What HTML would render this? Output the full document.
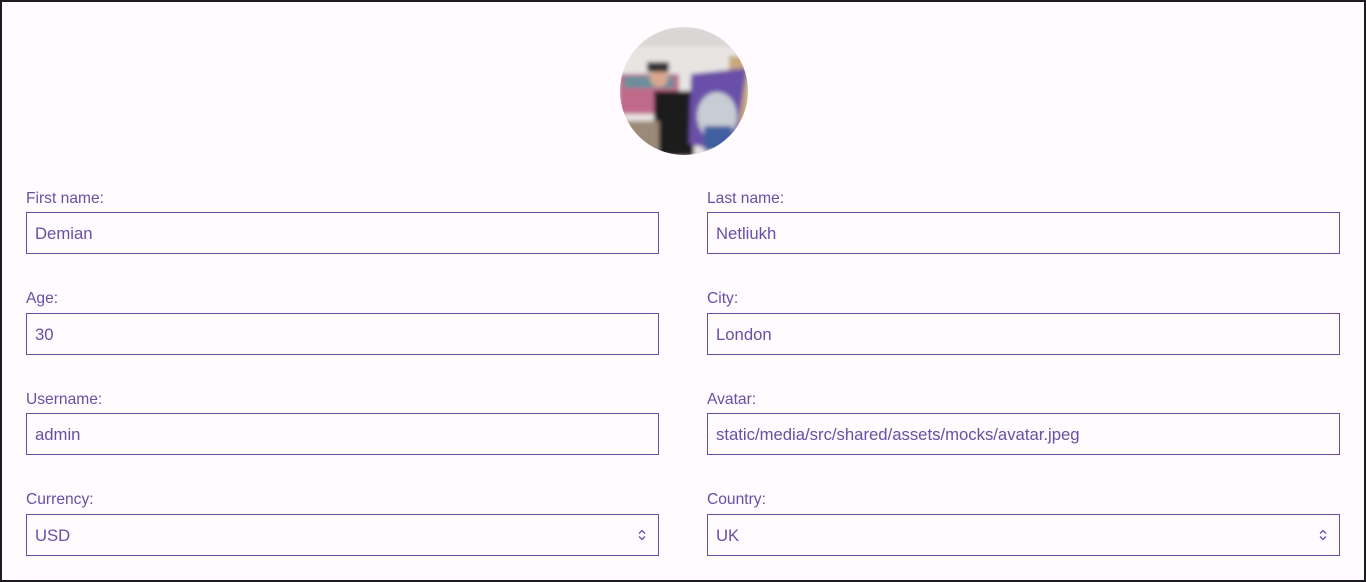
<!DOCTYPE html>
<html><head><style>
*{box-sizing:border-box;margin:0;padding:0}
html,body{width:1366px;height:582px;overflow:hidden;background:#fffbfe}
body{border:2px solid #1c1b1f;position:relative;font-family:"Liberation Sans",sans-serif;color:#6750a4}
.lab{position:absolute;font-size:15.6px;line-height:18px;top:1px}
.inp{position:absolute;width:633px;height:42px;border:1px solid #6750a4;font-size:16.7px;line-height:42px;padding-left:8px;background:#fffbfe}
.sel svg{position:absolute;right:12px;top:14px}
</style></head><body>
<svg style="position:absolute;left:617px;top:24px" width="130" height="130" viewBox="0 0 130 130">
<defs><clipPath id="c"><circle cx="65" cy="65" r="64"/></clipPath><filter id="b"><feGaussianBlur stdDeviation="2"/></filter></defs>
<g clip-path="url(#c)"><g filter="url(#b)">
<rect width="130" height="130" fill="#e8e4e2"/>
<rect y="0" width="130" height="20" fill="#d9d6d6"/>
<rect x="0" y="48" width="60" height="40" fill="#c06a8a"/>
<rect x="5" y="50" width="50" height="12" fill="#6a8f9a"/>
<rect x="110" y="30" width="20" height="80" fill="#c8a87a"/>
<rect x="35" y="65" width="40" height="65" fill="#1d1d1f"/>
<circle cx="40" cy="52" r="9" fill="#d9a88e"/>
<rect x="28" y="36" width="22" height="10" fill="#333"/>
<rect x="0" y="95" width="40" height="35" fill="#9b8a78"/>
<polygon points="72,48 128,42 115,128 70,118" fill="#6a4fa8"/>
<ellipse cx="98" cy="90" rx="20" ry="24" fill="#c8ccd4"/>
<rect x="85" y="100" width="28" height="25" fill="#3f5fa0"/>
</g></g></svg>
<div class="lab" style="left:24px;top:188px">First name:</div>
<div class="inp" style="left:24px;top:210px">Demian</div>
<div class="lab" style="left:705px;top:188px">Last name:</div>
<div class="inp" style="left:705px;top:210px">Netliukh</div>
<div class="lab" style="left:24px;top:288px">Age:</div>
<div class="inp" style="left:24px;top:311px">30</div>
<div class="lab" style="left:705px;top:288px">City:</div>
<div class="inp" style="left:705px;top:311px">London</div>
<div class="lab" style="left:24px;top:389px">Username:</div>
<div class="inp" style="left:24px;top:411px">admin</div>
<div class="lab" style="left:705px;top:389px">Avatar:</div>
<div class="inp" style="left:705px;top:411px">static/media/src/shared/assets/mocks/avatar.jpeg</div>
<div class="lab" style="left:24px;top:489px">Currency:</div>
<div class="inp sel" style="left:24px;top:512px">USD<svg width="8" height="12" viewBox="0 0 8 12"><path d="M1 4.5L4 1.5L7 4.5M1 7.5L4 10.5L7 7.5" fill="none" stroke="#6750a4" stroke-width="1.3"/></svg></div>
<div class="lab" style="left:705px;top:489px">Country:</div>
<div class="inp sel" style="left:705px;top:512px">UK<svg width="8" height="12" viewBox="0 0 8 12"><path d="M1 4.5L4 1.5L7 4.5M1 7.5L4 10.5L7 7.5" fill="none" stroke="#6750a4" stroke-width="1.3"/></svg></div>
</body></html>
